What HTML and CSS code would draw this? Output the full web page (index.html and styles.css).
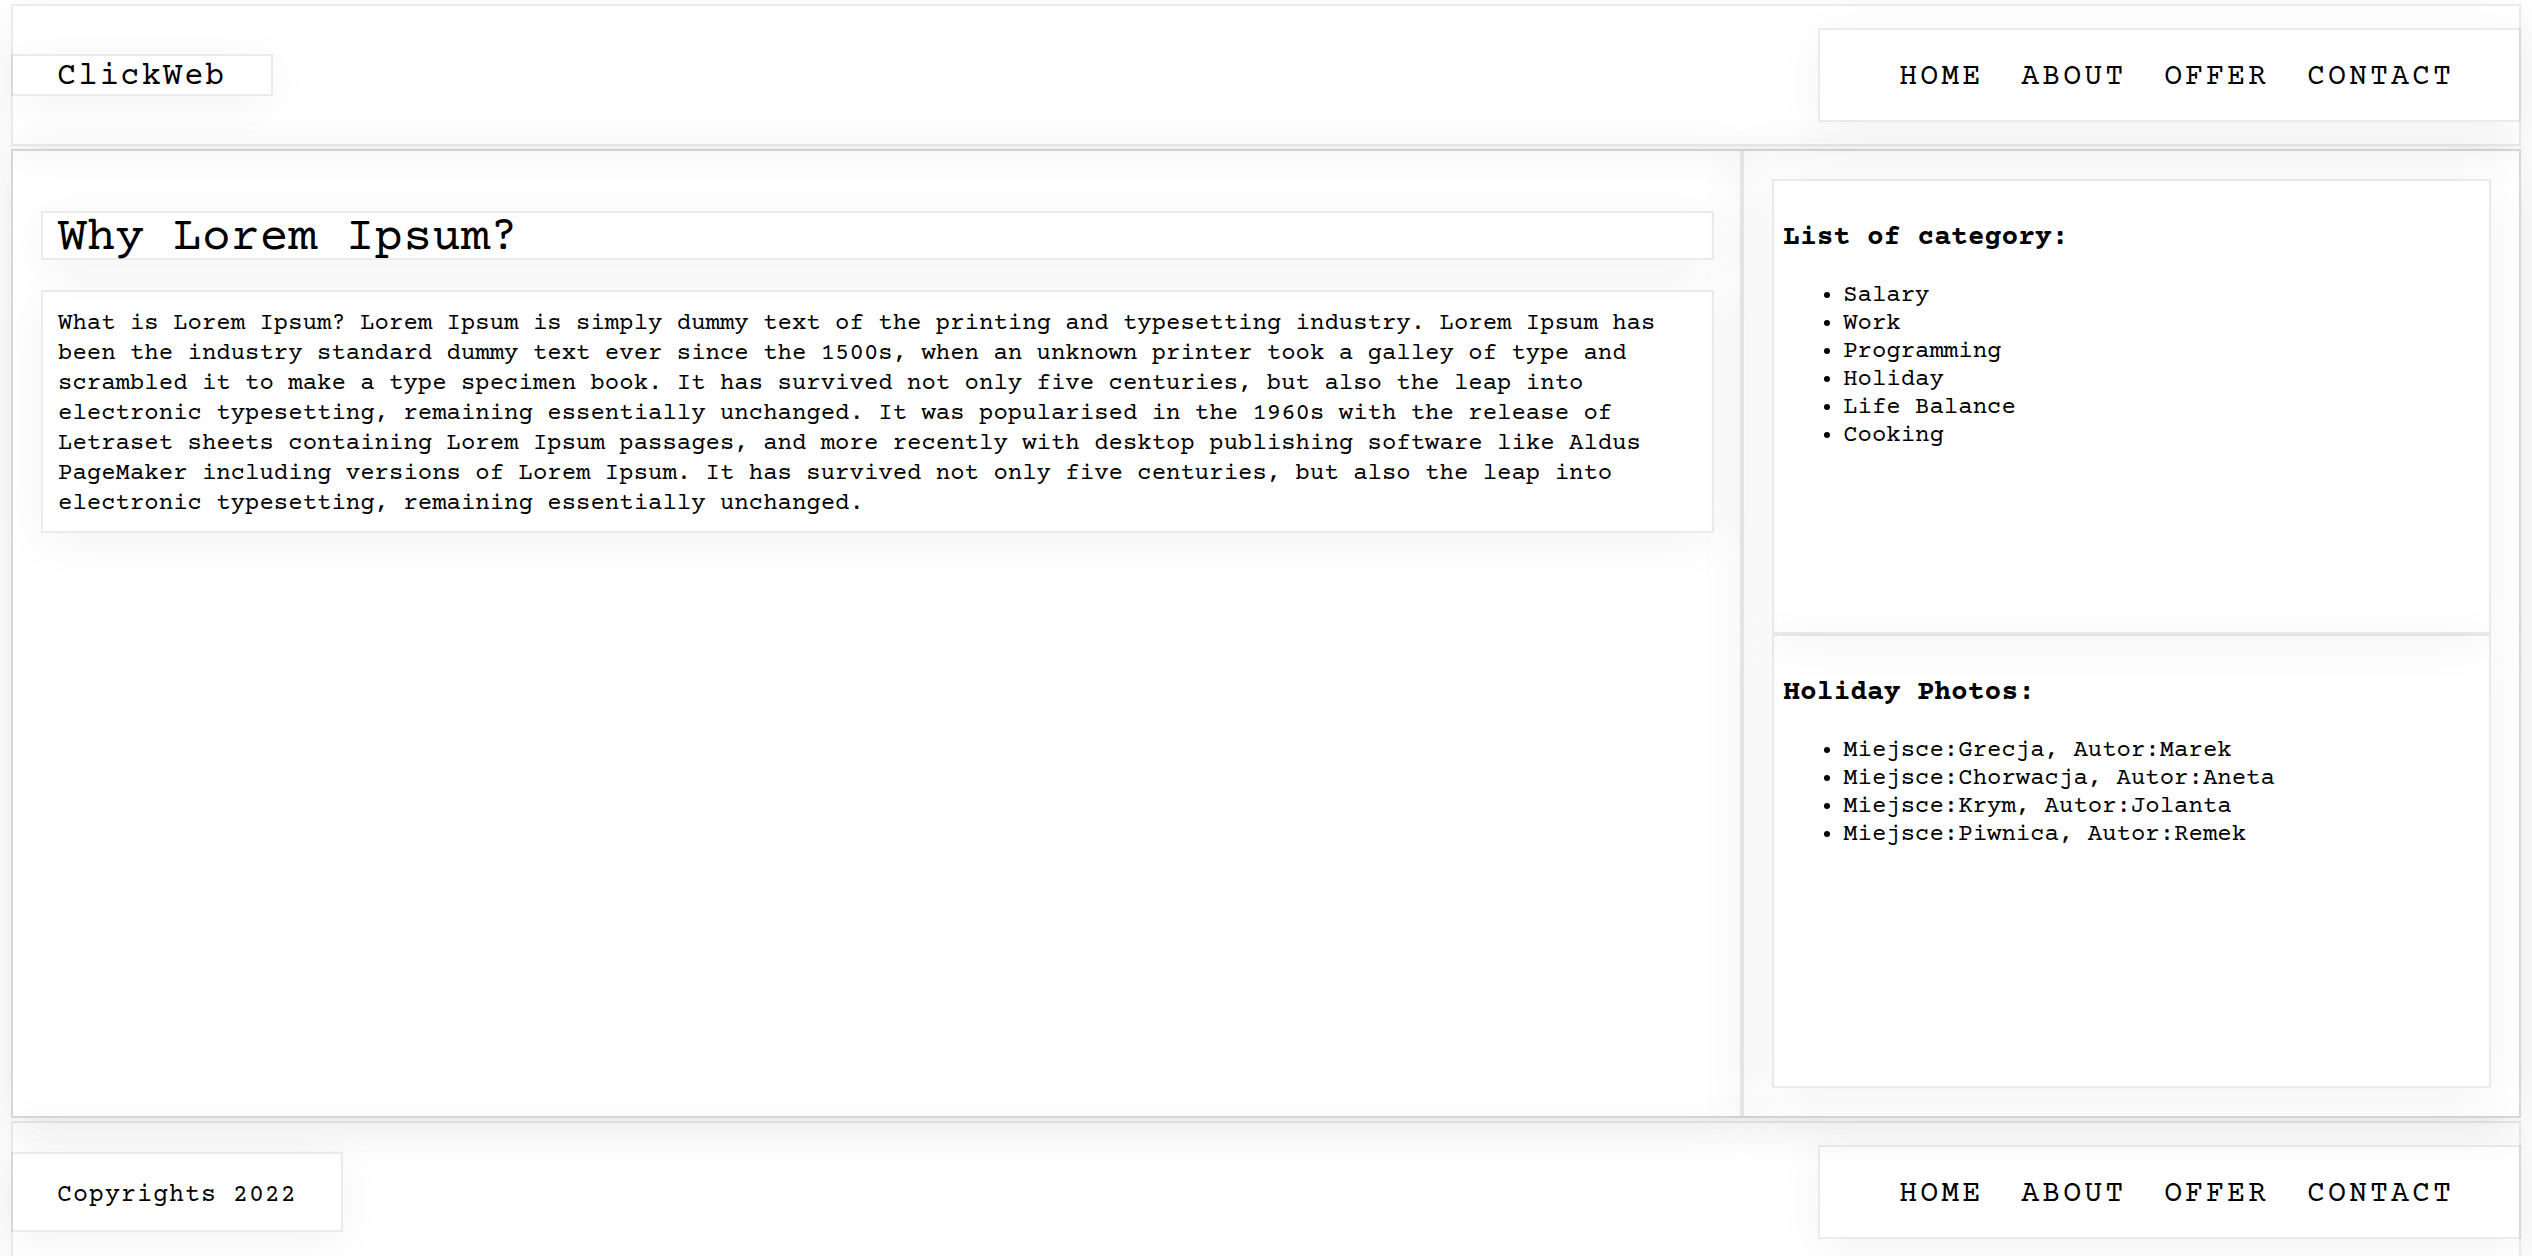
FILE: index.html
```html
<!DOCTYPE html>
<html lang="en">
<head>
  <meta charset="utf-8">
  <meta name="viewport" content="width=device-width, initial-scale=1">
  <title>ClickWeb</title>
  <link rel="stylesheet" href="styles.css">
</head>
<body>
  <header class="bar">
    <div class="logo box">ClickWeb</div>
    <nav class="nav box" aria-label="Main">
      <a href="#home">HOME</a>
      <a href="#about">ABOUT</a>
      <a href="#offer">OFFER</a>
      <a href="#contact">CONTACT</a>
    </nav>
  </header>

  <main class="main">
    <article class="article box">
      <h1 class="title box">Why Lorem Ipsum?</h1>
      <p class="text box">What is Lorem Ipsum? Lorem Ipsum is simply dummy text of the printing and typesetting industry. Lorem Ipsum has been the industry standard dummy text ever since the 1500s, when an unknown printer took a galley of type and scrambled it to make a type specimen book. It has survived not only five centuries, but also the leap into electronic typesetting, remaining essentially unchanged. It was popularised in the 1960s with the release of Letraset sheets containing Lorem Ipsum passages, and more recently with desktop publishing software like Aldus PageMaker including versions of Lorem Ipsum. It has survived not only five centuries, but also the leap into electronic typesetting, remaining essentially unchanged.</p>
    </article>
    <aside class="sidebar box">
      <section class="panel box">
        <h3>List of category:</h3>
        <ul>
          <li>Salary</li>
          <li>Work</li>
          <li>Programming</li>
          <li>Holiday</li>
          <li>Life Balance</li>
          <li>Cooking</li>
        </ul>
      </section>
      <section class="panel box">
        <h3>Holiday Photos:</h3>
        <ul>
          <li>Miejsce:Grecja, Autor:Marek</li>
          <li>Miejsce:Chorwacja, Autor:Aneta</li>
          <li>Miejsce:Krym, Autor:Jolanta</li>
          <li>Miejsce:Piwnica, Autor:Remek</li>
        </ul>
      </section>
    </aside>
  </main>

  <footer class="bar">
    <div class="copyright box">Copyrights 2022</div>
    <nav class="nav box" aria-label="Footer">
      <a href="#home">HOME</a>
      <a href="#about">ABOUT</a>
      <a href="#offer">OFFER</a>
      <a href="#contact">CONTACT</a>
    </nav>
  </footer>
</body>
</html>
```
FILE: styles.css
```css
* {
  box-sizing: border-box;
}

html {
  scrollbar-width: none;
}

body {
  display: flex;
  flex-direction: column;
  gap: 3px;
  margin: 0;
  padding: 4px 11px 0;
  background: #fff;
  color: #000;
  font-family: "Courier Prime", "Courier New", "Liberation Mono", monospace;
  font-size: 24px;
  line-height: 28px;
}

.bar,
.main,
.box {
  border: 2px solid rgba(0, 0, 0, 0.08);
  box-shadow: 0 8px 48px rgba(0, 0, 0, 0.05);
}

.bar {
  display: flex;
  align-items: center;
  justify-content: space-between;
  min-height: 142px;
}

.bar .box {
  margin: 0 -2px;
}

.logo {
  padding: 5px 44px 0;
  font-size: 32px;
  line-height: 33px;
  letter-spacing: 2px;
}

.nav {
  display: flex;
  gap: 38px;
  padding: 34px 65px 28px 79px;
  font-size: 30px;
  letter-spacing: 3px;
}

.nav a {
  color: inherit;
  text-decoration: none;
}

.copyright {
  padding: 28px 44px 20px;
  font-size: 25px;
  letter-spacing: 1px;
}

.main {
  display: grid;
  grid-template-columns: 69fr 31fr;
  min-height: 969px;
}

.article {
  margin: -2px 0 -2px -2px;
  padding: 60px 26px 28px 28px;
}

.title {
  margin: 0 0 30px;
  padding: 5px 15px 0;
  font-size: 48px;
  font-weight: 400;
  line-height: 40px;
}

.text {
  margin: 0;
  padding: 17px 15px 12px;
  line-height: 30px;
}

.sidebar {
  display: grid;
  grid-template-rows: 1fr 1fr;
  margin: -2px -2px -2px 0;
  padding: 28px;
}

.panel {
  padding: 41px 9px 20px;
}

.panel h3 {
  margin: 0 0 28px;
  font-size: 28px;
  line-height: 32px;
}

.panel ul {
  margin: 0;
  padding-left: 60px;
}
```
